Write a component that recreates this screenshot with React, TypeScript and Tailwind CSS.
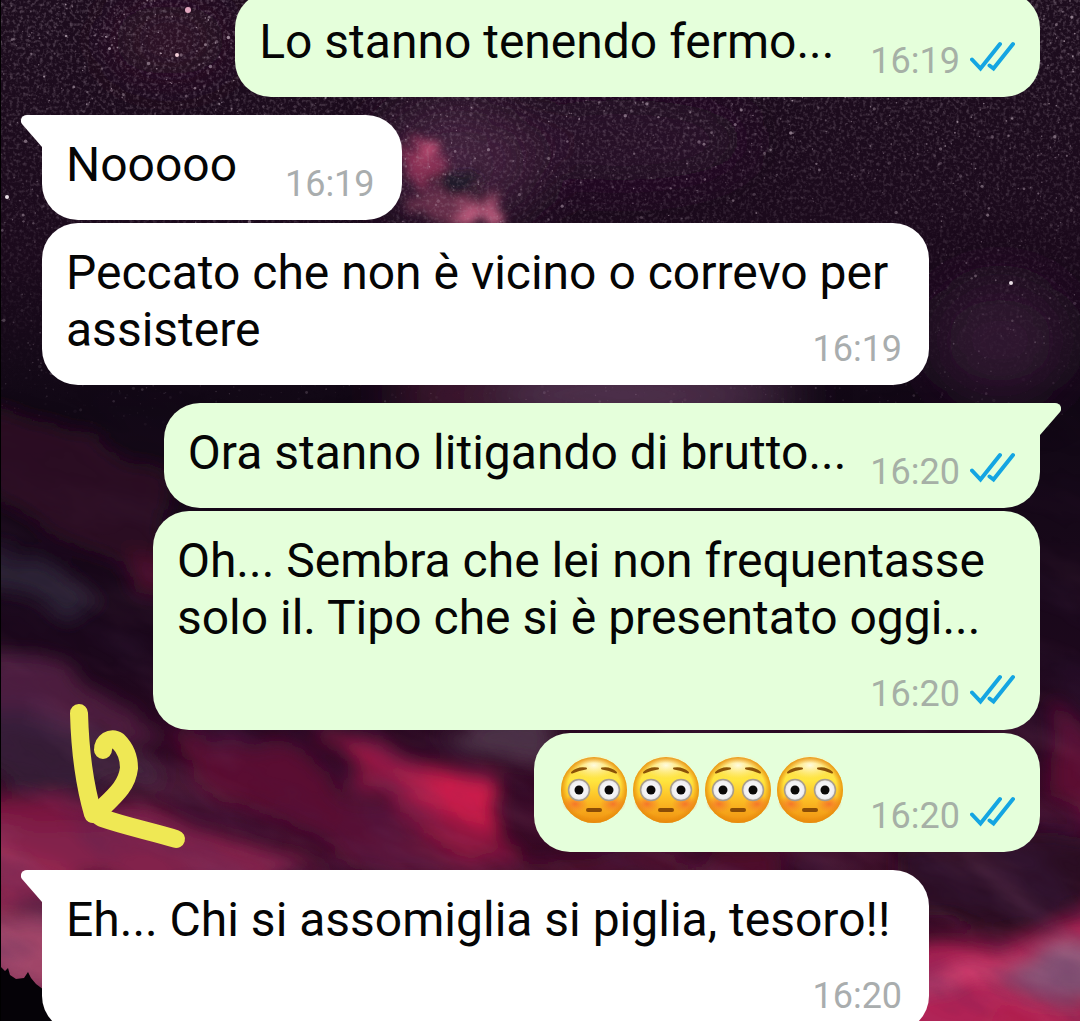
import React from 'react';
import clsx from 'clsx';

interface Message {
  id: string;
  text: string;
  time: string;
  sent: boolean;
  startsGroup: boolean;
  tail: boolean;
  emojiCount?: number;
}

// Trailing non-breaking spaces are part of what was typed
const messages: Message[] = [
  { id: 'm1', text: 'Lo stanno tenendo fermo...\u00a0', time: '16:19', sent: true, startsGroup: false, tail: false },
  { id: 'm2', text: 'Nooooo\u00a0\u00a0', time: '16:19', sent: false, startsGroup: true, tail: true },
  { id: 'm3', text: 'Peccato che non è vicino o correvo per assistere', time: '16:19', sent: false, startsGroup: false, tail: false },
  { id: 'm4', text: 'Ora stanno litigando di brutto...', time: '16:20', sent: true, startsGroup: true, tail: true },
  { id: 'm5', text: 'Oh... Sembra che lei non frequentasse solo il. Tipo che si è presentato oggi...', time: '16:20', sent: true, startsGroup: false, tail: false },
  { id: 'm6', text: '', time: '16:20', sent: true, startsGroup: false, tail: false, emojiCount: 4 },
  { id: 'm7', text: 'Eh... Chi si assomiglia si piglia, tesoro!!', time: '16:20', sent: false, startsGroup: true, tail: true },
];

// Small seeded generator so the sky is the same on every render
const makeStars = (count: number) => {
  let seed = 77;
  const next = () => {
    seed = (seed * 16807) % 2147483647;
    return seed / 2147483647;
  };
  return Array.from({ length: count }, (_, id) => {
    const y = Math.pow(next(), 1.2) * 430;
    return {
      id,
      x: next() * 1080,
      y,
      r: 0.7 + Math.pow(next(), 5) * 1.1,
      opacity: (0.12 + Math.pow(next(), 3) * 0.6) * (1 - y / 520),
    };
  });
};

const stars = makeStars(5200);

const Wallpaper: React.FC = () => (
  <svg
    className="absolute inset-0 h-full w-full"
    viewBox="0 0 1080 1021"
    preserveAspectRatio="xMidYMid slice"
    aria-hidden="true"
  >
    <defs>
      <linearGradient id="sky" x1="0" y1="0" x2="0" y2="1">
        <stop offset="0" stopColor="#1d0d1e" />
        <stop offset="0.25" stopColor="#1b0a1c" />
        <stop offset="0.4" stopColor="#110815" />
        <stop offset="0.65" stopColor="#1c081c" />
        <stop offset="0.8" stopColor="#3a0a28" />
        <stop offset="0.87" stopColor="#30081f" />
        <stop offset="1" stopColor="#4f1234" />
      </linearGradient>
      <filter id="cloud" x="-20%" y="-20%" width="140%" height="140%">
        <feTurbulence type="fractalNoise" baseFrequency="0.012 0.022" numOctaves="5" seed="8" result="noise" />
        <feDisplacementMap in="SourceGraphic" in2="noise" scale="45" xChannelSelector="R" yChannelSelector="G" result="bent" />
        <feGaussianBlur in="bent" stdDeviation="9" />
      </filter>
      <filter id="wisp" x="0" y="0" width="100%" height="100%">
        <feTurbulence type="fractalNoise" baseFrequency="0.007 0.02" numOctaves="4" seed="21" />
        <feColorMatrix values="0 0 0 0 0.55  0 0 0 0 0.2  0 0 0 0 0.34  2.6 0 0 0 -1.2" />
      </filter>
      <filter id="shade" x="0" y="0" width="100%" height="100%">
        <feTurbulence type="fractalNoise" baseFrequency="0.008 0.018" numOctaves="4" seed="4" />
        <feColorMatrix values="0 0 0 0 0.06  0 0 0 0 0.02  0 0 0 0 0.09  0 2.6 0 0 -1.1" />
      </filter>
      <filter id="nebula" x="-50%" y="-50%" width="200%" height="200%">
        <feTurbulence type="fractalNoise" baseFrequency="0.07" numOctaves="5" seed="5" result="noise" />
        <feDisplacementMap in="SourceGraphic" in2="noise" scale="40" xChannelSelector="R" yChannelSelector="G" result="bent" />
        <feGaussianBlur in="bent" stdDeviation="5" />
      </filter>
      <filter id="haze" x="-50%" y="-50%" width="200%" height="200%">
        <feGaussianBlur stdDeviation="26" />
      </filter>
      <filter id="dust" x="0" y="0" width="100%" height="100%">
        <feTurbulence type="fractalNoise" baseFrequency="0.3" numOctaves="2" seed="3" />
        <feColorMatrix values="0 0 0 0 0.5  0 0 0 0 0.4  0 0 0 0 0.48  1.6 0 0 0 -0.75" />
        <feGaussianBlur stdDeviation="0.6" />
      </filter>
      <linearGradient id="dustFade" x1="0" y1="0" x2="0" y2="1">
        <stop offset="0" stopColor="#999" />
        <stop offset="0.5" stopColor="#555" />
        <stop offset="1" stopColor="#000" />
      </linearGradient>
      <linearGradient id="wispFade" x1="0" y1="0" x2="0" y2="1">
        <stop offset="0" stopColor="#000" />
        <stop offset="0.5" stopColor="#888" />
        <stop offset="1" stopColor="#fff" />
      </linearGradient>
      <mask id="dustMask">
        <rect width="1080" height="400" fill="url(#dustFade)" />
      </mask>
      <mask id="wispMask">
        <rect y="380" width="1080" height="641" fill="url(#wispFade)" />
      </mask>
    </defs>

    <rect width="1080" height="1021" fill="url(#sky)" />

    {/* Milky way */}
    <g filter="url(#haze)">
      <ellipse cx="170" cy="40" rx="60" ry="35" fill="#4d1734" opacity="0.4" />
      <ellipse cx="460" cy="160" rx="80" ry="60" fill="#4b2543" opacity="0.8" />
      <ellipse cx="620" cy="140" rx="130" ry="40" fill="#341530" opacity="0.6" />
      <ellipse cx="620" cy="395" rx="180" ry="26" fill="#664060" />
      <ellipse cx="450" cy="395" rx="60" ry="20" fill="#5c2040" />
      <ellipse cx="1000" cy="340" rx="70" ry="60" fill="#321a34" opacity="0.8" />
    </g>
    <g filter="url(#nebula)">
      <ellipse cx="455" cy="205" rx="50" ry="14" fill="#7c3754" opacity="0.7" />
      <ellipse cx="424" cy="160" rx="20" ry="24" fill="#a8385f" opacity="0.7" />
      <ellipse cx="432" cy="152" rx="10" ry="10" fill="#d05a80" opacity="0.8" />
      <ellipse cx="480" cy="215" rx="24" ry="9" fill="#d4688c" opacity="0.8" />
      <ellipse cx="455" cy="182" rx="26" ry="10" fill="#171726" opacity="0.8" />
    </g>
    <g mask="url(#dustMask)">
      <rect width="1080" height="400" filter="url(#dust)" />
    </g>
    {stars.map(star => (
      <circle key={star.id} cx={star.x} cy={star.y} r={star.r} fill="#e6d3e0" opacity={star.opacity} />
    ))}
    <circle cx="188" cy="10" r="3" fill="#f6b8cf" opacity="0.9" />
    <circle cx="177" cy="55" r="2" fill="#f3cfd9" />
    <circle cx="1011" cy="283" r="2" fill="#e9dfe6" />
    <circle cx="7" cy="197" r="2" fill="#e9dfe6" />

    {/* Sunset clouds */}
    <g filter="url(#cloud)">
      <path d="M-20 400 L60 430 L170 480 L170 590 L100 560 L-20 490Z" fill="#2c0820" />
      <path d="M120 555 L170 560 L170 600 L130 590Z" fill="#4a0a2c" />
      <path d="M-20 540 L40 555 L100 600 L70 620 L-20 580Z" fill="#2c2035" />
      <path d="M-20 650 L60 665 L160 740 L90 745 L-20 700Z" fill="#4e1f3c" />
      <path d="M-20 700 L90 730 L170 780 L60 790 L-20 770Z" fill="#361a34" />
      <path d="M-20 805 L80 795 L200 820 L330 880 L-20 885Z" fill="#82234c" />
      <path d="M-20 790 L60 790 L120 815 L50 830 L-20 815Z" fill="#7a1840" />
      <path d="M170 725 L280 745 L420 830 L540 865 L400 880 L220 800Z" fill="#5a0f32" />
      <path d="M300 733 L360 738 L430 765 L440 800 L370 780Z" fill="#86163f" />
      <path d="M345 775 L400 780 L490 825 L520 858 L460 850 L390 810Z" fill="#8e1440" />
      <path d="M400 768 L440 762 L488 775 L490 810 L505 838 L460 818 L410 796Z" fill="#d01c4c" />
      <path d="M340 748 L400 765 L440 790 L400 790Z" fill="#c01c4a" />
      <path d="M440 720 L560 720 L545 775 L505 750Z" fill="#4b3146" />
      <path d="M-20 850 L60 850 L70 900 L-20 920Z" fill="#96264f" />
      <path d="M-20 920 L70 920 L70 1000 L-20 970Z" fill="#a04468" />
      <path d="M520 858 L800 855 L780 880 L520 875Z" fill="#4f0a2c" />
      <path d="M1050 700 L1100 740 L1100 830 L1055 800Z" fill="#5c0e32" />
      <path d="M900 850 L1100 840 L1100 900 L1000 930 L910 915Z" fill="#2c0822" />
      <path d="M900 950 L1000 955 L1110 900 L1110 1060 L900 1060Z" fill="#b02454" />
      <path d="M1000 985 L1050 950 L1110 930 L1110 1000Z" fill="#8c5678" />
      <path d="M900 975 L980 965 L1030 965 L1000 985 L900 1000Z" fill="#d84474" />
      <path d="M1000 1005 L1110 1000 L1110 1040 L960 1040Z" fill="#b01a4c" />
      <path d="M960 935 L1020 940 L1010 955 L970 952Z" fill="#5c0c34" />
    </g>
    <g mask="url(#wispMask)">
      <g transform="rotate(24 540 700)">
        <rect x="-200" y="200" width="1500" height="1000" filter="url(#wisp)" opacity="0.2" />
        <rect x="-200" y="200" width="1500" height="1000" filter="url(#shade)" opacity="0.35" />
      </g>
    </g>

    {/* Tree line */}
    <path
      d="M0 966 L5 971 L8 968 L10 975 L16 979 L24 978 L28 972 L31 978 L36 984 L44 990 L60 1000 L90 1021 L0 1021Z"
      fill="#050207"
    />
    <rect width="1" height="1021" fill="#000" />
  </svg>
);

const ReadTicks: React.FC = () => (
  <svg className="mb-2.5 h-8 w-[46px]" viewBox="0 0 46 32" fill="none" role="img" aria-label="Letto">
    <path
      d="M2 19.500 L10.500 28.500 L30 4 M19.500 25.500 L23.500 28.500 L43 4"
      stroke="#14a5e2"
      strokeWidth="4"
      strokeLinecap="round"
      strokeLinejoin="miter"
    />
  </svg>
);

const FlushedFace: React.FC = () => (
  <svg className="inline-block h-[71px] w-[72px] align-top" viewBox="0 0 72 71" role="img" aria-label="😳">
    <defs>
      <linearGradient id="face" x1="0" y1="0" x2="0" y2="1">
        <stop offset="0" stopColor="#fbd95c" />
        <stop offset="0.35" stopColor="#ffe640" />
        <stop offset="0.6" stopColor="#fdc428" />
        <stop offset="1" stopColor="#f08f10" />
      </linearGradient>
      <radialGradient id="rim" cx="0.5" cy="0.5" r="0.5">
        <stop offset="0.82" stopColor="#e88a08" stopOpacity="0" />
        <stop offset="1" stopColor="#e58a0c" stopOpacity="0.85" />
      </radialGradient>
      <radialGradient id="shine" cx="0.5" cy="0.4" r="0.5">
        <stop offset="0" stopColor="#fffbe0" />
        <stop offset="1" stopColor="#fff3a0" stopOpacity="0" />
      </radialGradient>
      <radialGradient id="blush">
        <stop offset="0" stopColor="#f4632c" stopOpacity="0.75" />
        <stop offset="1" stopColor="#f4702c" stopOpacity="0" />
      </radialGradient>
      <radialGradient id="eye">
        <stop offset="0" stopColor="#ffffff" />
        <stop offset="0.8" stopColor="#f1f0f2" />
        <stop offset="1" stopColor="#cfcfd4" />
      </radialGradient>
    </defs>
    <circle cx="36" cy="36" r="33" fill="url(#face)" />
    <ellipse cx="36" cy="14" rx="23" ry="13" fill="url(#shine)" />
    <circle cx="36" cy="36" r="33" fill="url(#rim)" />
    <ellipse cx="17" cy="50" rx="13" ry="9" fill="url(#blush)" />
    <ellipse cx="55" cy="50" rx="13" ry="9" fill="url(#blush)" />
    <path d="M14 18.500 Q20 13 28 14.500 Q21 15.500 14 18.500Z" fill="#8a5208" stroke="#8a5208" strokeWidth="2" strokeLinejoin="round" />
    <path d="M44 14.500 Q52 13 58 18.500 Q51 15.500 44 14.500Z" fill="#8a5208" stroke="#8a5208" strokeWidth="2" strokeLinejoin="round" />
    <circle cx="21" cy="36" r="10.500" fill="url(#eye)" stroke="#a79c8c" strokeWidth="1.500" />
    <circle cx="51" cy="36" r="10.500" fill="url(#eye)" stroke="#a79c8c" strokeWidth="1.500" />
    <circle cx="21" cy="36" r="4.500" fill="#0b0908" />
    <circle cx="51" cy="36" r="4.500" fill="#0b0908" />
    <rect x="28" y="54" width="16" height="4" rx="2" fill="#8a4c06" />
  </svg>
);

const Tail: React.FC<{ sent: boolean }> = ({ sent }) => (
  <svg
    className={clsx(
      'absolute top-0 h-[33px] w-[22px]',
      sent ? '-right-[21px] -scale-x-100 text-[#e5ffdb]' : '-left-[21px] text-white'
    )}
    viewBox="0 0 22 33"
    aria-hidden="true"
  >
    <path d="M22 0 H6 C1 0 -2 5 1 9 L21 32 L22 33Z" fill="currentColor" />
  </svg>
);

const Bubble: React.FC<{ message: Message }> = ({ message }) => {
  const { sent, tail, emojiCount } = message;

  return (
    <li
      className={clsx(
        'relative flow-root max-w-8/9 rounded-[36px] pt-[21px] pb-[15px] pl-6',
        message.startsGroup ? 'mt-[18px]' : 'mt-[3px]',
        sent ? 'self-end bg-[#e5ffdb] pr-6' : 'self-start bg-white pr-[27px]',
        tail && (sent ? 'rounded-tr-none' : 'rounded-tl-none')
      )}
    >
      {tail && <Tail sent={sent} />}
      {emojiCount
        ? Array.from({ length: emojiCount }, (_, i) => <FlushedFace key={i} />)
        : message.text}
      <span
        className={clsx(
          'float-right ml-6 flex items-end gap-2.5 text-4xl/[42px]',
          emojiCount ? 'mt-[41px]' : 'mt-[27px]',
          sent ? 'text-[#a6b0a6]' : 'text-[#a9adae]'
        )}
      >
        <time>{message.time}</time>
        {sent && <ReadTicks />}
      </span>
    </li>
  );
};

// Hand-drawn arrow on top of the chat
const Doodle: React.FC = () => (
  <svg
    className="absolute top-[700px] left-[66px] h-[152px] w-[124px]"
    viewBox="0 0 124 152"
    fill="none"
    stroke="#efe854"
    strokeWidth="18"
    strokeLinecap="round"
    strokeLinejoin="round"
    aria-hidden="true"
  >
    <path d="M13 13 C14 50 18 83 27 114" />
    <path d="M37 50 C37 42 45 36 52 41 C59 48 63 58 63 68 C61 87 47 97 30 114 L36 118 C62 127 84 131 110 139" />
  </svg>
);

const App: React.FC = () => {
  return (
    <main className="relative h-screen overflow-hidden bg-[#1d0e1f] font-['Roboto',sans-serif] text-[48px]/[57px] text-[#050505]">
      <Wallpaper />
      <ul className="relative -mt-[11px] flex flex-col pr-10 pl-[42px]">
        {messages.map(message => (
          <Bubble key={message.id} message={message} />
        ))}
      </ul>
      <Doodle />
    </main>
  );
};

export default App;
